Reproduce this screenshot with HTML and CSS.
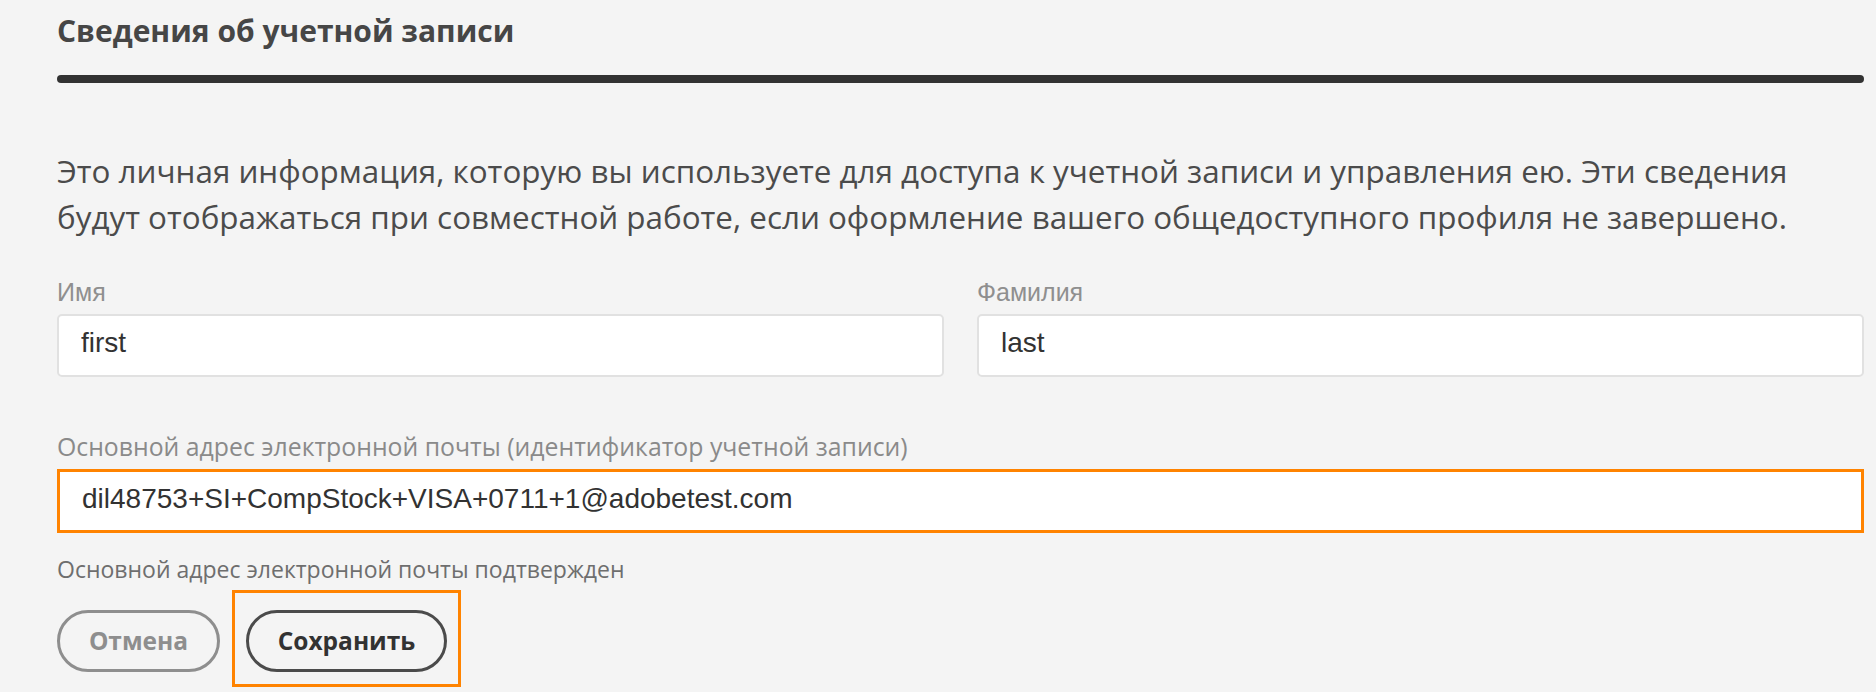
FILE: index.html
```html
<!DOCTYPE html>
<html lang="ru">
<head>
<meta charset="utf-8">
<title>Сведения об учетной записи</title>
<link rel="stylesheet" href="styles.css">
</head>
<body>
<main class="page">
  <h1 class="title">Сведения об учетной записи</h1>
  <div class="rule"></div>
  <p class="intro">Это личная информация, которую вы используете для доступа к учетной записи и управления ею. Эти сведения<br>будут отображаться при совместной работе, если оформление вашего общедоступного профиля не завершено.</p>
  <div class="name-row">
    <label class="field">
      <span class="label-sm">Имя</span>
      <input class="input" type="text" value="first">
    </label>
    <label class="field">
      <span class="label-sm">Фамилия</span>
      <input class="input" type="text" value="last">
    </label>
  </div>
  <label class="field email-field">
    <span class="label-lg">Основной адрес электронной почты (идентификатор учетной записи)</span>
    <input class="input input-email" type="text" value="dil48753+SI+CompStock+VISA+0711+1@adobetest.com">
  </label>
  <p class="verified">Основной адрес электронной почты подтвержден</p>
  <div class="actions">
    <button class="btn btn-cancel" type="button">Отмена</button>
    <span class="highlight"><button class="btn btn-save" type="button">Сохранить</button></span>
  </div>
</main>
</body>
</html>
```
FILE: styles.css
```css
html, body {
  margin: 0;
  padding: 0;
  background: #f4f4f4;
}
.page {
  padding: 11px 12px 0 57px;
  display: flex;
  flex-direction: column;
  font-family: "Open Sans", "Noto Sans", sans-serif;
  color: #4b4b4b;
}
.title {
  margin: 0;
  font-size: 30px;
  line-height: 40px;
  font-weight: 700;
  color: #464646;
}
.rule {
  margin-top: 24px;
  height: 8px;
  border-radius: 4px;
  background: #323232;
}
.intro {
  margin: 65px 0 0;
  font-size: 31.4px;
  line-height: 46px;
  color: #4b4b4b;
  white-space: nowrap;
}
.name-row {
  margin-top: 37px;
  display: grid;
  grid-template-columns: 1fr 1fr;
  column-gap: 33px;
}
.field {
  display: flex;
  flex-direction: column;
}
.label-sm {
  font-family: "Liberation Sans", Arial, sans-serif;
  font-size: 25px;
  line-height: 30px;
  color: #8f8f8f;
}
.input {
  margin-top: 7px;
  box-sizing: border-box;
  width: 100%;
  height: 63px;
  padding: 0 22px 6px;
  border: 2px solid #e1e1e1;
  border-radius: 5px;
  background: #fff;
  font-family: "Liberation Sans", Arial, sans-serif;
  font-size: 28px;
  color: #323232;
  outline: none;
}
.email-field {
  margin-top: 52px;
}
.label-lg {
  font-size: 24.8px;
  line-height: 34px;
  color: #8a8a8a;
}
.input-email {
  margin-top: 6px;
  height: 64px;
  padding: 0 22px 4px;
  border: 3px solid #ff8300;
  border-radius: 0;
}
.verified {
  margin: 20px 0 0;
  font-size: 23px;
  line-height: 32px;
  color: #6e6e6e;
}
.actions {
  margin-top: 5px;
  display: flex;
  align-items: flex-start;
  gap: 12px;
}
.btn {
  box-sizing: border-box;
  height: 62px;
  border-radius: 31px;
  border: 3px solid #8e8e8e;
  background: transparent;
  font-family: "Open Sans", "Noto Sans", sans-serif;
  font-size: 24.5px;
  font-weight: 700;
  padding: 0 20px 2px;
  cursor: pointer;
}
.btn-cancel {
  margin-top: 20px;
  width: 163px;
  color: #8e8e8e;
}
.highlight {
  display: flex;
  border: 3px solid #ff8300;
  padding: 17px 11px 12px;
}
.btn-save {
  width: 201px;
  border-color: #4b4b4b;
  color: #323232;
}
```
